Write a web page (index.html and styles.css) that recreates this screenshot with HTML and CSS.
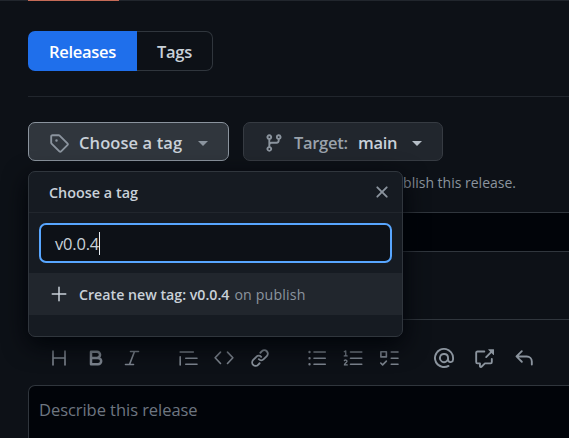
FILE: index.html
```html
<!DOCTYPE html>
<html lang="en">
<head>
<meta charset="utf-8">
<title>New release</title>
<link rel="stylesheet" href="styles.css">
</head>
<body>
<div class="tabline"><span class="tab-active"></span></div>
<main class="page">
  <nav class="subnav"><a class="seg selected"><span class="t-releases">Releases</span></a><a class="seg tags"><span class="t-tags">Tags</span></a></nav>
  <div class="actions">
    <div class="picker">
      <button class="btn open">
        <svg class="icon" viewBox="0 0 16 16"><path d="M1 7.775V2.75C1 1.784 1.784 1 2.75 1h5.025c.464 0 .91.184 1.238.513l6.25 6.25a1.75 1.75 0 0 1 0 2.474l-5.026 5.026a1.75 1.75 0 0 1-2.474 0l-6.25-6.25A1.752 1.752 0 0 1 1 7.775Zm1.5 0c0 .066.026.13.073.177l6.25 6.25a.25.25 0 0 0 .354 0l5.025-5.025a.25.25 0 0 0 0-.354l-6.25-6.25a.25.25 0 0 0-.177-.073H2.75a.25.25 0 0 0-.25.25ZM6 5a1 1 0 1 1 0 2 1 1 0 0 1 0-2Z"/></svg>
        <span class="t-choose">Choose a tag</span><i class="caret"></i>
      </button>
      <section class="menu">
        <header class="menu-head"><span class="t-title">Choose a tag</span>
          <svg class="icon" viewBox="0 0 16 16"><path d="M3.72 3.72a.75.75 0 0 1 1.06 0L8 6.94l3.22-3.22a.749.749 0 0 1 1.275.326.749.749 0 0 1-.215.734L9.06 8l3.22 3.22a.749.749 0 0 1-.326 1.275.749.749 0 0 1-.734-.215L8 9.06l-3.22 3.22a.751.751 0 0 1-1.042-.018.751.751 0 0 1-.018-1.042L6.94 8 3.72 4.78a.75.75 0 0 1 0-1.06Z"/></svg>
        </header>
        <div class="menu-filter"><div class="field"><span class="t-value">v0.0.4</span><i class="cursor"></i></div></div>
        <div class="menu-item">
          <svg class="icon plus" viewBox="0 0 16 16"><path d="M7.4 2.6a.6.6 0 0 1 1.2 0v4.8h4.8a.6.6 0 0 1 0 1.2H8.6v4.8a.6.6 0 0 1-1.2 0V8.6H2.6a.6.6 0 0 1 0-1.2h4.8Z"/></svg>
          <span class="t-create">Create new tag: v0.0.4</span><span class="t-on">on publish</span>
        </div>
      </section>
    </div>
    <button class="btn target">
      <svg class="icon" viewBox="0 0 16 16"><path d="M9.5 3.25a2.25 2.25 0 1 1 3 2.122V6A2.5 2.5 0 0 1 10 8.5H6a1 1 0 0 0-1 1v1.128a2.251 2.251 0 1 1-1.5 0V5.372a2.25 2.25 0 1 1 1.5 0v1.836A2.493 2.493 0 0 1 6 7h4a1 1 0 0 0 1-1v-.628A2.25 2.25 0 0 1 9.5 3.25Zm-6 0a.75.75 0 1 0 1.5 0 .75.75 0 0 0-1.5 0Zm8.25-.75a.75.75 0 1 0 0 1.5.75.75 0 0 0 0-1.5ZM4.25 12a.75.75 0 1 0 0 1.5.75.75 0 0 0 0-1.5Z"/></svg>
      <span class="t-target">Target:</span><span class="t-main">main</span><i class="caret"></i>
    </button>
  </div>
  <p class="hint">publish this release.</p>
  <div class="title-input"></div>
  <div class="editor">
    <div class="toolbar">
      <div class="group">
        <svg class="icon line" viewBox="0 0 16 16"><path d="M3.2 2.5v11M12.8 2.5v11M3.2 8h9.6"/></svg>
        <svg class="icon line bold" viewBox="0 0 16 16"><path d="M4 3h4.8a2.4 2.4 0 0 1 0 4.9H4zM4 7.9h5.6a2.5 2.5 0 0 1 0 5.1H4z"/></svg>
        <svg class="icon line" viewBox="0 0 16 16"><path d="M6.8 2.8h6.4M2.8 13.2h6.4M10 2.8l-4 10.4"/></svg>
      </div>
      <div class="group quote">
        <svg class="icon line" viewBox="0 0 16 16"><path d="M1.75 3.2h10.5M1.75 7v6.5M6.2 8.2h9M6.2 13h9"/></svg>
        <svg class="icon line" viewBox="0 0 16 16"><path d="M5.2 3.3.9 7.8l4.3 4.6M10.8 3.3l4.3 4.5-4.3 4.6"/></svg>
        <svg class="icon" viewBox="0 0 16 16"><path d="m7.775 3.275 1.25-1.25a3.5 3.5 0 1 1 4.95 4.95l-2.5 2.5a3.5 3.5 0 0 1-4.95 0 .751.751 0 0 1 .018-1.042.751.751 0 0 1 1.042-.018 1.998 1.998 0 0 0 2.83 0l2.5-2.5a2.002 2.002 0 0 0-2.83-2.83l-1.25 1.25a.751.751 0 0 1-1.042-.018.751.751 0 0 1-.018-1.042Zm-4.69 9.64a1.998 1.998 0 0 0 2.83 0l1.25-1.25a.751.751 0 0 1 1.042.018.751.751 0 0 1 .018 1.042l-1.25 1.25a3.5 3.5 0 1 1-4.95-4.95l2.5-2.5a3.5 3.5 0 0 1 4.95 0 .751.751 0 0 1-.018 1.042.751.751 0 0 1-1.042.018 1.998 1.998 0 0 0-2.83 0l-2.5 2.5a1.998 1.998 0 0 0 0 2.83Z"/></svg>
      </div>
      <div class="group lists">
        <svg class="icon line" viewBox="0 0 16 16"><path d="M5.6 3.2h9M5.6 8.2h9M5.6 13h9"/><path class="dots" d="M2 3.2h.01M2 8.2h.01M2 13h.01"/></svg>
        <svg class="icon line" viewBox="0 0 16 16"><path d="M6 3.2h9M6 8.2h9M6 13h9"/><path class="thin" d="M1 3l1.2-.7v4M1 6.3h2.3M1.1 10.1c.5-.8 2.1-.6 2.1.4 0 1-2.1 1.6-2.1 3h2.3"/></svg>
        <svg class="icon line" viewBox="0 0 16 16"><path d="M9.8 3.2h5.4M9.8 8.2h5.4M9.8 13h5.4M1.5 3h4.4v4.1H1.5zM1.4 12l1.5 1.5 3-3"/></svg>
      </div>
      <div class="group last">
        <svg class="icon" viewBox="0 0 16 16"><path d="M4.75 2.37a6.501 6.501 0 0 0 6.5 11.26.75.75 0 0 1 .75 1.298A7.999 7.999 0 0 1 .989 4.148 8 8 0 0 1 16 7.75v1.5a2.75 2.75 0 0 1-5.072 1.475 3.999 3.999 0 0 1-6.65-4.19A4 4 0 0 1 12 8v1.25a1.25 1.25 0 0 0 2.5 0V7.867a6.5 6.5 0 0 0-9.75-5.496V2.37ZM10.5 8a2.5 2.5 0 1 0-5 0 2.5 2.5 0 0 0 5 0Z"/></svg>
        <svg class="icon" viewBox="0 0 16 16"><path d="M2.75 3.5a.25.25 0 0 0-.25.25v7.5c0 .138.112.25.25.25h2a.75.75 0 0 1 .75.75v2.19l2.72-2.72a.749.749 0 0 1 .53-.22h4.5a.25.25 0 0 0 .25-.25v-2.5a.75.75 0 0 1 1.5 0v2.5A1.75 1.75 0 0 1 13.25 13H9.06l-2.573 2.573A1.458 1.458 0 0 1 4 14.543V13H2.75A1.75 1.75 0 0 1 1 11.25v-7.5C1 2.784 1.784 2 2.75 2h5.5a.75.75 0 0 1 0 1.5ZM16 1.25v4.146a.25.25 0 0 1-.427.177L14.03 4.03l-3.75 3.75a.749.749 0 0 1-1.275-.326.749.749 0 0 1 .215-.734l3.75-3.75-1.543-1.543A.25.25 0 0 1 11.604 1h4.146a.25.25 0 0 1 .25.25Z"/></svg>
        <svg class="icon" viewBox="0 0 16 16"><path d="M6.78 1.97a.75.75 0 0 1 0 1.06L3.81 6h6.44A4.75 4.75 0 0 1 15 10.75v2.5a.75.75 0 0 1-1.5 0v-2.5a3.25 3.25 0 0 0-3.25-3.25H3.81l2.97 2.97a.749.749 0 0 1-.326 1.275.749.749 0 0 1-.734-.215L1.47 7.28a.75.75 0 0 1 0-1.06l4.25-4.25a.75.75 0 0 1 1.06 0Z"/></svg>
      </div>
    </div>
    <div class="textarea"><span class="t-describe">Describe this release</span></div>
  </div>
</main>
</body>
</html>
```
FILE: styles.css
```css
* { box-sizing: border-box; }
body { margin: 0; width: 569px; height: 438px; overflow: hidden; background: #0d1117; color: #c9d1d9; font-family: "Open Sans", "Noto Sans", sans-serif; font-size: 16.5px; }
span, p { white-space: nowrap; }
.tabline { height: 1px; padding-left: 28px; background: #21262d; }
.tab-active { display: block; width: 91px; height: 1px; background: #c56b57; }
.page { padding-left: 28px; height: 437px; overflow: hidden; }
.icon { display: block; flex: none; width: 20px; height: 20px; fill: #8b949e; }
.plus { fill: #c9d1d9; }
.line { fill: none; stroke: #7d858f; stroke-width: 1.3; stroke-linecap: round; stroke-linejoin: round; }
.bold { stroke-width: 2; }
.dots { stroke-width: 1.9; }
.thin { stroke-width: 1; }

.subnav { display: flex; height: 96px; padding: 30px 0 25px; border-bottom: 1px solid #21262d; }
.seg { display: flex; align-items: center; justify-content: center; font-weight: 600; }
.selected { width: 109px; background: #1f6feb; color: #fff; border-radius: 7px 0 0 7px; }
.tags { width: 76px; border: 1px solid #30363d; border-left: 0; border-radius: 0 7px 7px 0; }

.actions { display: flex; gap: 14px; margin-top: 25px; height: 39px; }
.picker { position: relative; }
.btn { display: flex; align-items: center; height: 39px; padding: 2px 0 0 20px; border: 1px solid #363b42; border-radius: 7px; background: #21262d; color: #c9d1d9; font: 600 16.5px "Open Sans", "Noto Sans", sans-serif; text-align: left; }
.open { width: 201px; background: #30363d; border-color: #8b949e; }
.target { width: 200px; }
.caret { border: 5px solid transparent; border-top-color: #8b949e; border-bottom: 0; margin-top: 1px; }
.target .caret { border-top-color: #b5bdc6; }
.t-choose { width: 105px; margin: 0 14px 0 10px; }
.t-target { width: 54px; margin: 0 10px; color: #9aa2ab; }
.t-main { width: 40px; margin-right: 14px; }

.menu { position: absolute; z-index: 2; left: 0; top: 49px; width: 375px; height: 166px; border: 1px solid #30363d; border-radius: 7px; background: #161b22; box-shadow: 0 8px 24px #010409; }
.menu-head { display: flex; align-items: center; justify-content: space-between; height: 41px; padding: 0 10px 0 20px; border-bottom: 1px solid #21262d; font-size: 14.4px; font-weight: 600; }
.menu-filter { padding: 10px; height: 60px; }
.field { display: flex; align-items: center; height: 40px; padding-left: 14px; border: 2px solid #58a6ff; border-radius: 7px; background: #0d1117; }
.cursor { width: 1px; height: 23px; background: #e6edf3; }
.menu-item { display: flex; align-items: center; height: 42px; padding-left: 20px; background: #21262d; font-size: 14.2px; }
.t-create { margin-left: 10px; font-weight: 600; }
.t-on { margin-left: 5px; color: #8b949e; }

.hint { width: 488px; height: 20px; margin: 12px 0 19px; line-height: 20px; font-size: 14px; text-align: right; color: #8b949e; }
.title-input { height: 40px; border: 1px solid #30363d; border-right: 0; background: #010409; }
.editor { margin-top: 67px; border-top: 1px solid #30363d; }
.toolbar { display: flex; height: 65px; padding: 28px 0 0 21px; }
.group { display: flex; gap: 16.5px; margin-right: 36px; }
.quote { gap: 16px; margin-right: 37px; }
.lists { gap: 16px; margin-right: 35px; }
.last { gap: 20px; margin-right: 0; }
.textarea { height: 80px; padding: 12px 0 0 10px; border: 1px solid #30363d; border-right: 0; border-radius: 7px 0 0; background: #010409; line-height: 23px; color: #6e7681; }
.t-releases, .t-tags, .t-target, .t-main { letter-spacing: -.3px; }
.t-choose { letter-spacing: .1px; }
.t-value { letter-spacing: -.2px; }
.t-on { letter-spacing: .15px; }
.t-describe { letter-spacing: -.05px; }
```
